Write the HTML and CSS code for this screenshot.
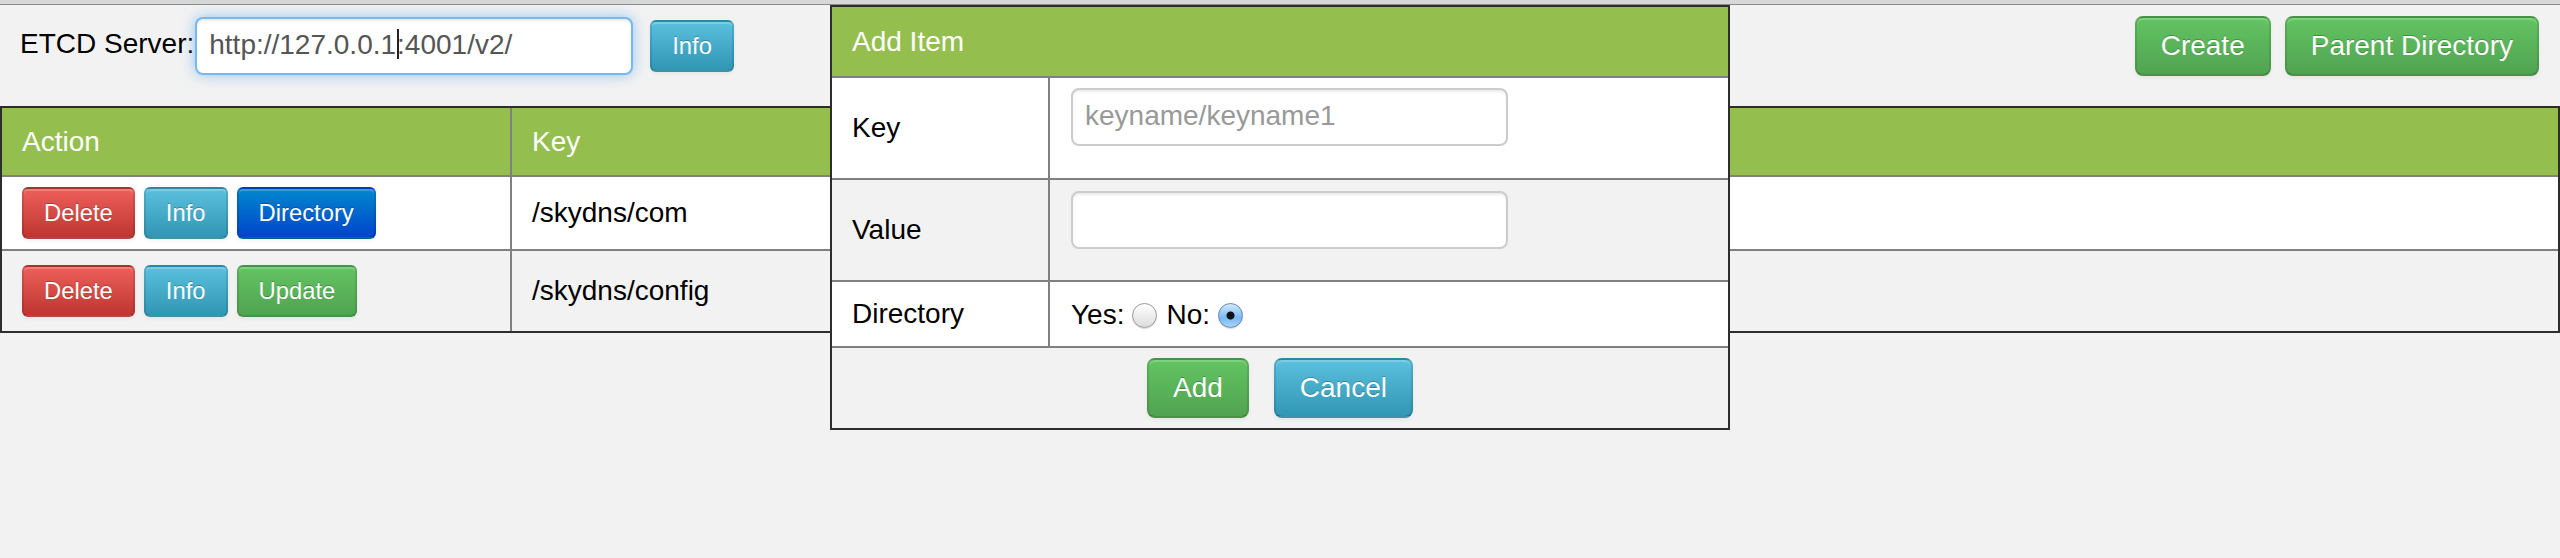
FILE: index.html
```html
<!DOCTYPE html>
<html lang="en">
<head>
<meta charset="utf-8">
<title>ETCD Browser</title>
<link rel="stylesheet" href="styles.css">
</head>
<body>
<div class="chrome-strip"></div>
<div class="toolbar">
  <div class="server">
    <span class="server-label">ETCD Server:</span>
    <div class="url-input">http://127.0.0.1<span class="caret"></span>:4001/v2/</div>
    <button class="btn btn-small btn-info info-top">Info</button>
  </div>
  <div class="actions">
    <button class="btn btn-success">Create</button>
    <button class="btn btn-success">Parent Directory</button>
  </div>
</div>

<table class="keys">
  <thead>
    <tr class="head-row">
      <th class="col-action">Action</th>
      <th class="col-key">Key</th>
    </tr>
  </thead>
  <tbody>
    <tr class="row-one">
      <td class="col-action">
        <div class="btn-group">
          <button class="btn btn-small btn-danger">Delete</button>
          <button class="btn btn-small btn-info">Info</button>
          <button class="btn btn-small btn-primary">Directory</button>
        </div>
      </td>
      <td class="col-key">/skydns/com</td>
    </tr>
    <tr class="row-two">
      <td class="col-action">
        <div class="btn-group">
          <button class="btn btn-small btn-danger">Delete</button>
          <button class="btn btn-small btn-info">Info</button>
          <button class="btn btn-small btn-success">Update</button>
        </div>
      </td>
      <td class="col-key">/skydns/config</td>
    </tr>
  </tbody>
</table>

<div class="modal">
  <div class="modal-header">Add Item</div>
  <table class="modal-table">
    <tr class="m-row m-key">
      <td class="m-label">Key</td>
      <td class="m-field"><div class="text-input placeholder">keyname/keyname1</div></td>
    </tr>
    <tr class="m-row m-value">
      <td class="m-label">Value</td>
      <td class="m-field"><div class="text-input"></div></td>
    </tr>
    <tr class="m-row m-dir">
      <td class="m-label">Directory</td>
      <td class="m-radios">
        <span class="radio-label">Yes:</span><span class="radio"></span><span class="radio-label">No:</span><span class="radio checked"></span>
      </td>
    </tr>
  </table>
  <div class="modal-footer">
    <button class="btn btn-success">Add</button>
    <button class="btn btn-info">Cancel</button>
  </div>
</div>
</body>
</html>
```

FILE: styles.css
```css
* { box-sizing: border-box; }

html, body {
  margin: 0;
  padding: 0;
}

body {
  background: #f2f2f2;
  font-family: "Liberation Sans", Arial, sans-serif;
  font-size: 28px;
  color: #000;
  position: relative;
  height: 558px;
  overflow: hidden;
}

.chrome-strip {
  height: 5px;
  background: #d7d7d7;
  border-bottom: 1px solid #8c8c8c;
}

.toolbar {
  height: 81px;
  padding: 0 21px 0 20px;
  display: flex;
  align-items: center;
  justify-content: space-between;
}

.server {
  display: flex;
  align-items: center;
}

.server-label {
  line-height: 40px;
  margin-top: -4px;
}

.url-input {
  width: 438px;
  height: 58px;
  margin-left: 1px;
  border: 2px solid rgba(82, 168, 236, 0.8);
  border-radius: 8px;
  background: #fff;
  color: #555;
  padding: 0 12px;
  line-height: 52px;
  white-space: nowrap;
  box-shadow: inset 0 2px 2px rgba(0, 0, 0, 0.075), 0 0 14px rgba(82, 168, 236, 0.6);
}

.caret {
  display: inline-block;
  width: 2px;
  height: 30px;
  background: #222;
  vertical-align: -5px;
  margin: 0 -2px 0 1px;
}

.info-top {
  margin-left: 17px;
}

.actions {
  display: flex;
  gap: 14px;
}

/* Buttons */
.btn {
  font-family: "Liberation Sans", Arial, sans-serif;
  font-size: 28px;
  line-height: 40px;
  padding: 8px 24px;
  border: 2px solid;
  border-color: rgba(0, 0, 0, 0.1) rgba(0, 0, 0, 0.1) rgba(0, 0, 0, 0.25);
  border-radius: 8px;
  color: #fff;
  text-shadow: 0 -1px 0 rgba(0, 0, 0, 0.25);
  box-shadow: inset 0 2px 0 rgba(255, 255, 255, 0.2), 0 2px 4px rgba(0, 0, 0, 0.05);
  white-space: nowrap;
  cursor: pointer;
}

.btn-small {
  font-size: 23.8px;
  padding: 4px 20px;
  border-radius: 6px;
}

.btn-success { background: linear-gradient(#62c462, #51a351); }
.btn-info { background: linear-gradient(#5bc0de, #2f96b4); }
.btn-danger { background: linear-gradient(#ee5f5b, #bd362f); }
.btn-primary { background: linear-gradient(#0088cc, #0044cc); }

/* Key table */
.keys {
  margin-top: 20px;
  width: 100%;
  border: 2px solid #2d2d2d;
  border-collapse: separate;
  border-spacing: 0;
}

.keys th,
.keys td {
  padding: 0 20px;
  text-align: left;
  vertical-align: middle;
  font-weight: normal;
}

.keys .col-action {
  width: 510px;
  border-right: 2px solid #808080;
}

.head-row th {
  height: 69px;
  background: #94bf4f;
  color: #fff;
  border-bottom: 2px solid #808080;
}

.row-one td {
  height: 74px;
  background: #fff;
  border-bottom: 2px solid #808080;
}

.row-two td {
  height: 80px;
  background: #f2f2f2;
}

.btn-group {
  display: flex;
  gap: 9px;
}

/* Modal */
.modal {
  position: absolute;
  left: 830px;
  top: 5px;
  width: 900px;
  border: 2px solid #2d2d2d;
  background: #f2f2f2;
}

.modal-header {
  height: 71px;
  background: #94bf4f;
  color: #fff;
  padding: 0 20px;
  line-height: 69px;
  border-bottom: 2px solid #808080;
}

.modal-table {
  width: 100%;
  border-collapse: separate;
  border-spacing: 0;
}

.m-row td {
  border-bottom: 2px solid #808080;
  padding: 0;
}

.m-label {
  width: 218px;
  padding: 0 20px !important;
  border-right: 2px solid #808080;
  vertical-align: middle;
}

.m-key td { height: 102px; background: #fff; }
.m-value td { height: 102px; background: #f2f2f2; }
.m-dir td { height: 66px; background: #fff; }

.m-field {
  vertical-align: top;
  padding: 10px 0 0 21px !important;
}

.m-value .m-field { padding-top: 11px !important; }

.text-input {
  width: 437px;
  height: 58px;
  border: 2px solid #cccccc;
  border-radius: 8px;
  background: #fff;
  box-shadow: inset 0 2px 2px rgba(0, 0, 0, 0.075);
  padding: 0 12px;
  line-height: 52px;
  color: #555;
}

.placeholder {
  color: #999;
}

.m-radios {
  padding: 0 0 0 21px !important;
  vertical-align: middle;
  white-space: nowrap;
}

.radio-label {
  vertical-align: middle;
}

.radio {
  display: inline-block;
  width: 25px;
  height: 25px;
  border-radius: 50%;
  vertical-align: middle;
  margin: 2px 9px 0 8px;
  border: 1px solid #9a9a9a;
  background: linear-gradient(#ffffff, #dcdcdc);
  box-shadow: 0 1px 1px rgba(0, 0, 0, 0.15);
}

.radio.checked {
  border-color: #5f87b8;
  background:
    radial-gradient(circle, #101018 0, #101018 3.5px, rgba(16, 16, 24, 0) 4.5px),
    linear-gradient(#d4e9fc, #7ab8f2 60%, #a9d4fb);
}

.modal-footer {
  height: 80px;
  display: flex;
  justify-content: center;
  align-items: center;
  gap: 25px;
  background: #f2f2f2;
}
```
